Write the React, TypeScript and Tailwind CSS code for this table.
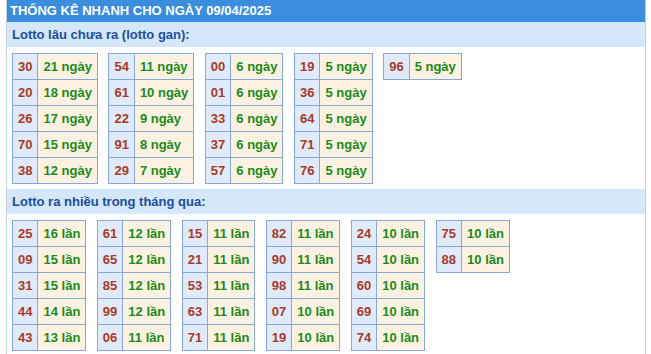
type Pair = [string, number];

const ganTables: Pair[][] = [
  [["30", 21], ["20", 18], ["26", 17], ["70", 15], ["38", 12]],
  [["54", 11], ["61", 10], ["22", 9], ["91", 8], ["29", 7]],
  [["00", 6], ["01", 6], ["33", 6], ["37", 6], ["57", 6]],
  [["19", 5], ["36", 5], ["64", 5], ["71", 5], ["76", 5]],
  [["96", 5]],
];

const hotTables: Pair[][] = [
  [["25", 16], ["09", 15], ["31", 15], ["44", 14], ["43", 13]],
  [["61", 12], ["65", 12], ["85", 12], ["99", 12], ["06", 11]],
  [["15", 11], ["21", 11], ["53", 11], ["63", 11], ["71", 11]],
  [["82", 11], ["90", 11], ["98", 11], ["07", 10], ["19", 10]],
  [["24", 10], ["54", 10], ["60", 10], ["69", 10], ["74", 10]],
  [["75", 10], ["88", 10]],
];

function LotoTable({ rows, unit }: { rows: Pair[]; unit: string }) {
  return (
    <table className="border-collapse">
      <tbody>
        {rows.map(([num, count]) => (
          <tr key={num}>
            <td className="border border-[#86a8dc] bg-[#dfeafa] px-[5px] py-[5px] text-[13px] leading-[15px] font-bold text-[#a83a28]">
              {num}
            </td>
            <td className="border border-[#86a8dc] bg-[#fdf2e1] px-[5px] py-[5px] text-[13px] leading-[15px] font-bold text-[#1b8a1b] whitespace-nowrap">
              {count} {unit}
            </td>
          </tr>
        ))}
      </tbody>
    </table>
  );
}

function Section({ title, tables, unit }: { title: string; tables: Pair[][]; unit: string }) {
  return (
    <>
      <div className="h-[25px] bg-[#d5e7fa] px-[5px] flex items-center text-[13px] font-bold text-[#1b4f9c]">
        {title}
      </div>
      <div className="flex items-start gap-[10.5px] px-[5px] pt-[6px] pb-[5px]">
        {tables.map((rows, i) => (
          <LotoTable key={i} rows={rows} unit={unit} />
        ))}
      </div>
    </>
  );
}

export default function App() {
  return (
    <div className="bg-white min-h-[354px] font-['Liberation_Sans',Arial,sans-serif]">
      <div className="ml-[6px] w-[640px] min-h-[354px] border-x border-[#c6d0dc]">
        <div className="h-[22px] bg-[#3b8ddd] px-[3px] flex items-center text-[13px] font-bold text-white">
          THỐNG KÊ NHANH CHO NGÀY 09/04/2025
        </div>
        <Section title="Lotto lâu chưa ra (lotto gan):" tables={ganTables} unit="ngày" />
        <Section title="Lotto ra nhiều trong tháng qua:" tables={hotTables} unit="lần" />
      </div>
    </div>
  );
}
